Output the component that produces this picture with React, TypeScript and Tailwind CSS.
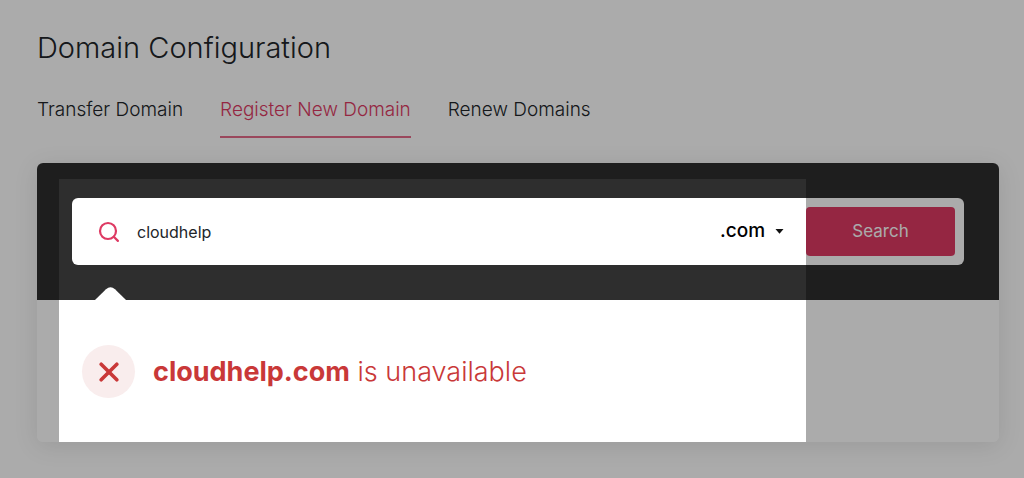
import React, { useState } from "react";

const TABS = ["Transfer Domain", "Register New Domain", "Renew Domains"];
const EXTENSIONS = [".com", ".net", ".org"];

function Tabs() {
  const [active, setActive] = useState("Register New Domain");

  return (
    <nav className="mt-7 flex gap-[37px]">
      {TABS.map((tab) => (
        <a
          key={tab}
          href="#"
          onClick={() => setActive(tab)}
          className={
            tab === active
              ? "border-b-2 border-[#de3a63]/75 pb-3 text-[19px] leading-7 font-light text-[#de3a63]"
              : "border-b-2 border-transparent pb-3 text-[19px] leading-7 font-light text-[#212529]"
          }
        >
          {tab}
        </a>
      ))}
    </nav>
  );
}

function SearchBar() {
  const [name, setName] = useState("cloudhelp");
  const [extension, setExtension] = useState(".com");

  return (
    <form
      className="flex items-center rounded-md bg-white py-[9px] pr-[9px] pl-[26px]"
      onSubmit={(e) => e.preventDefault()}
    >
      <svg
        className="size-[22px] shrink-0"
        viewBox="0 0 22 22"
        fill="none"
        stroke="#de3a63"
        strokeWidth="2.2"
        strokeLinecap="round"
      >
        <circle cx="10" cy="10" r="8" />
        <path d="M15.8 15.8 19.9 19.9" />
      </svg>
      <input
        aria-label="Domain name"
        value={name}
        onChange={(e) => setName(e.target.value)}
        className="ml-[17px] min-w-0 flex-1 bg-transparent text-base text-[#212529] outline-none"
      />
      <div className="relative mr-[22px] flex items-center">
        <select
          aria-label="Extension"
          value={extension}
          onChange={(e) => setExtension(e.target.value)}
          className="appearance-none bg-transparent pr-[18px] text-[19px] font-medium text-black outline-none"
        >
          {EXTENSIONS.map((ext) => (
            <option key={ext}>{ext}</option>
          ))}
        </select>
        <svg className="pointer-events-none absolute right-0 h-[5px] w-[9px]" viewBox="0 0 9 5">
          <path d="M0.5 0h8L4.5 4.8z" fill="#111" />
        </svg>
      </div>
      <button
        type="submit"
        className="h-[49px] w-[149px] shrink-0 rounded-sm bg-[#de3a63] text-[17px] text-white"
      >
        Search
      </button>
    </form>
  );
}

function Result() {
  return (
    <div className="relative flex items-center gap-[18px] rounded-b-md bg-white px-[45px] pt-[45px] pb-11 text-[#c93838]">
      <svg className="absolute -top-[13px] left-[58px] h-[13px] w-[31px]" viewBox="0 0 31 13">
        <path d="M0 13 11 2.3Q15.5-1.7 20 2.3L31 13z" fill="#fff" />
      </svg>
      <span className="flex size-[53px] shrink-0 items-center justify-center rounded-full bg-[#f9eded]">
        <svg
          className="size-5"
          viewBox="0 0 20 20"
          fill="none"
          stroke="currentColor"
          strokeWidth="3.6"
          strokeLinecap="round"
        >
          <path d="M2.2 2.2l15.6 15.6M17.8 2.2 2.2 17.8" />
        </svg>
      </span>
      <p className="text-[27px] leading-9 font-light">
        <strong className="font-bold">cloudhelp.com</strong> is unavailable
      </p>
    </div>
  );
}

export default function App() {
  return (
    <div className="min-h-screen overflow-hidden bg-white pt-7 pr-[25px] pb-9 pl-[37px] font-['Inter','Liberation_Sans',sans-serif]">
      <h1 className="text-[29px] leading-10 font-light text-[#212529]">Domain Configuration</h1>
      <Tabs />
      <div className="relative mt-[25px] rounded-md shadow-[0_4px_24px_rgba(0,0,0,0.1)]">
        <div className="rounded-t-md bg-[#2e2e2e] p-[35px]">
          <SearchBar />
        </div>
        <Result />
        {/* Spotlight: dims everything outside of the highlighted area */}
        <div className="pointer-events-none absolute top-4 right-[193px] bottom-0 left-[22px] shadow-[0_0_0_2000px_rgba(0,0,0,0.33)]" />
      </div>
    </div>
  );
}
